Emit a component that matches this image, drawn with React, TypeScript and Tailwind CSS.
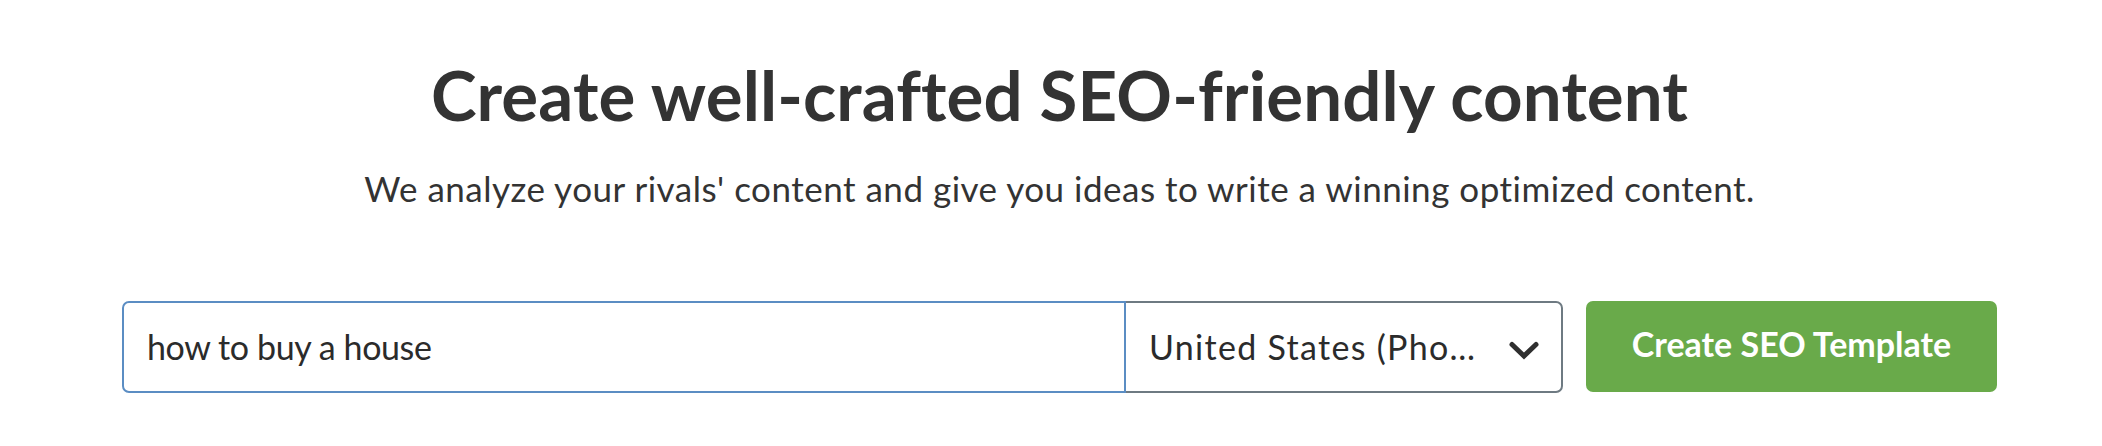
import React from "react";

export default function App() {
  return (
    <div className="h-[446px] w-full bg-white font-['Lato',sans-serif] text-[#333333]">
      <div className="ml-[122px] flex w-[1875px] flex-col items-center pt-[60px]">
        <h1 className="text-[69px] font-bold leading-[69px] tracking-[0.1px] text-[#333333]">
          Create well-crafted SEO-friendly content
        </h1>
        <p className="mt-[42px] text-[35px] leading-[35px] tracking-[0.5px] text-[#333333]">
          We analyze your rivals' content and give you ideas to write a winning optimized content.
        </p>
        <div className="mt-[95px] flex h-[92px] w-full items-stretch">
          <div className="relative z-10 flex w-[1004px] items-center rounded-l-[7px] border-2 border-[#5b8dc3] bg-white pl-[23px]">
            <span className="text-[34px] leading-none tracking-[-0.4px] text-[#2b2b2b]">
              how to buy a house
            </span>
          </div>
          <div className="-ml-[2px] flex w-[439px] items-center justify-between rounded-r-[7px] border-2 border-[#6e7a82] bg-white pl-[23px] pr-[22px]">
            <span className="text-[34px] leading-none tracking-[1.3px] text-[#2b2b2b]">
              United States (Pho…
            </span>
            <svg width="30" height="19" viewBox="0 0 30 19" className="mt-[6px]">
              <path
                d="M3 3.5 L15 15 L27 3.5"
                fill="none"
                stroke="#2f2f2f"
                strokeWidth="5"
                strokeLinecap="round"
                strokeLinejoin="miter"
              />
            </svg>
          </div>
          <button className="ml-[23px] flex h-[91px] w-[411px] items-center justify-center rounded-[7px] bg-[#69aa4a] pb-[5px] text-[34px] font-bold leading-none text-white">
            Create SEO Template
          </button>
        </div>
      </div>
    </div>
  );
}
